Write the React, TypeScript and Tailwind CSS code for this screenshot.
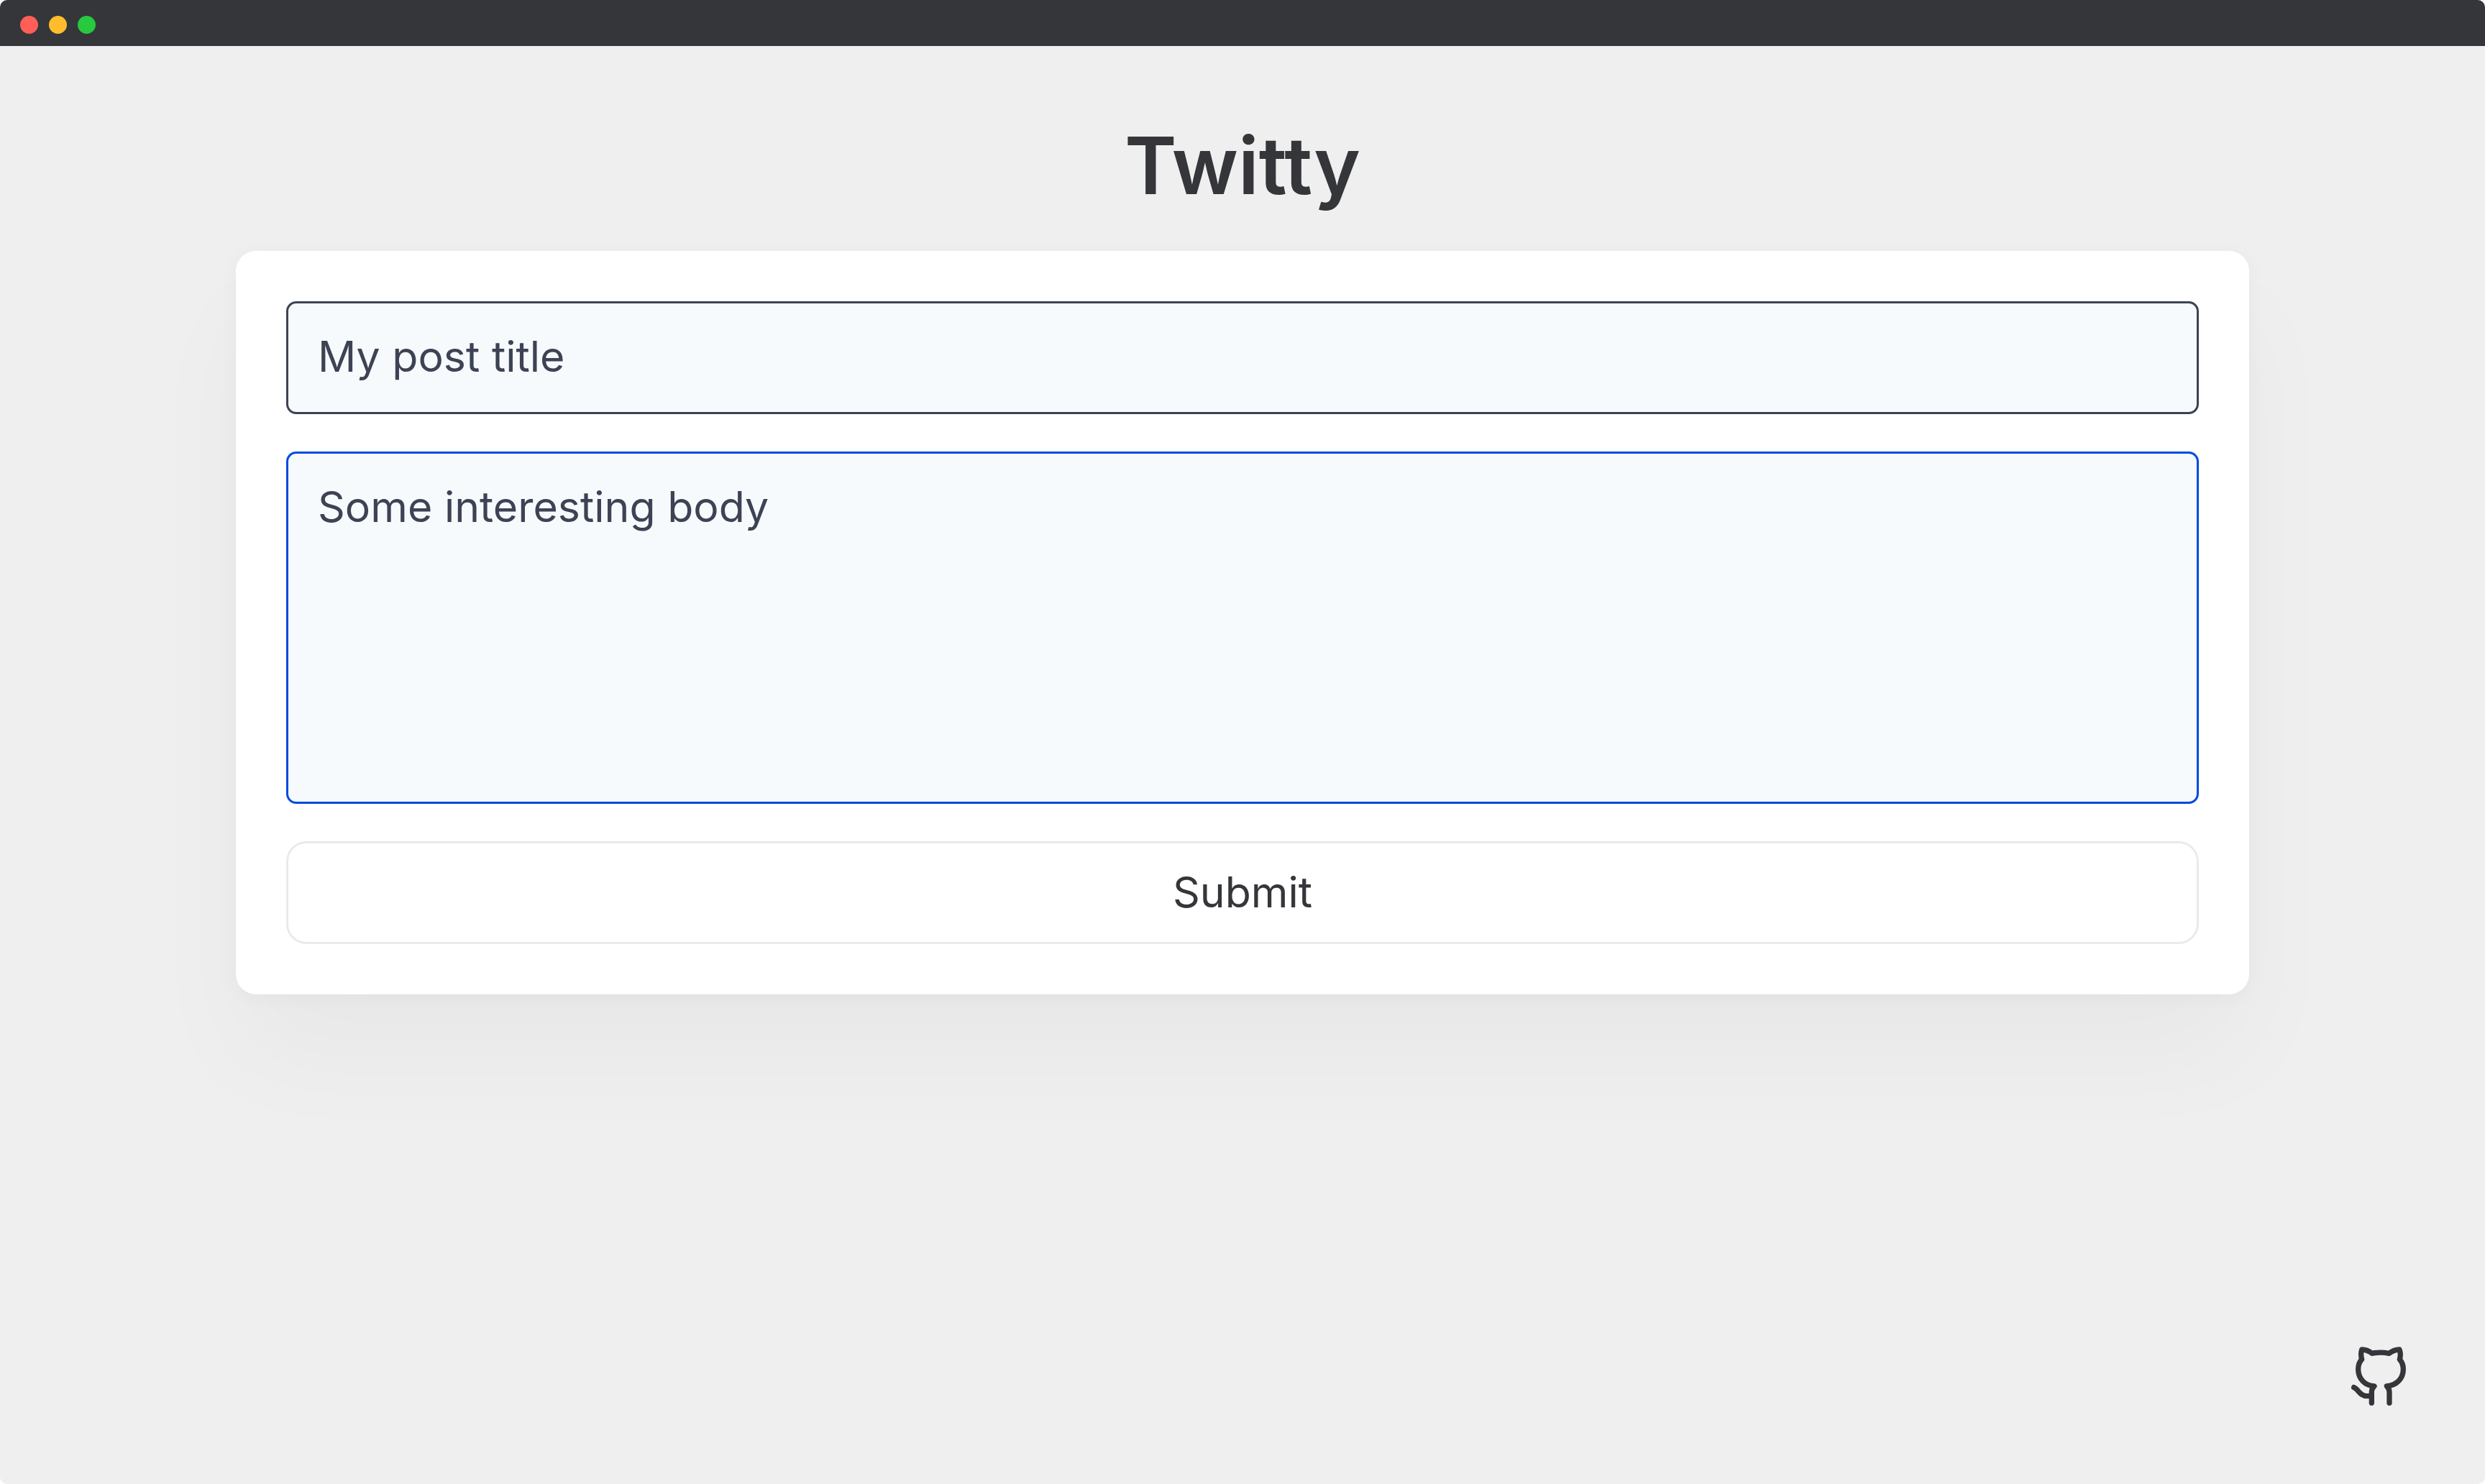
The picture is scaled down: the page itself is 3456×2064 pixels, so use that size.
import { useState } from "react";

function WindowBar() {
  return (
    <header className="flex h-16 shrink-0 items-center gap-[15px] bg-[#35363a] px-7 pt-1">
      <span className="size-[25px] rounded-full bg-[#ff5f56]" />
      <span className="size-[25px] rounded-full bg-[#ffbd2e]" />
      <span className="size-[25px] rounded-full bg-[#27c93f]" />
    </header>
  );
}

function GithubIcon() {
  return (
    <svg
      viewBox="84 63 240 264"
      className="h-[88px] w-20"
      fill="none"
      stroke="currentColor"
      strokeWidth="22"
      strokeLinecap="round"
      strokeLinejoin="round"
      aria-hidden="true"
    >
      <path d="M175 307V262C175 250 179 243 186 237C146 233 119 206 119 166C119 149 124 135 134 125C130 111 130 97 134 84C151 84 164 90 177 100Q212 93 248 100C261 90 274 84 291 84C296 97 296 111 292 125C302 136 307 149 307 166C307 206 279 233 238 237C245 243 249 250 249 262V307" />
      <path d="M101 242C121 250 125 278 155 278H172" />
    </svg>
  );
}

export default function App() {
  const [title, setTitle] = useState("My post title");
  const [body, setBody] = useState("Some interesting body");

  return (
    <div className="min-h-screen bg-white">
      <div className="flex min-h-screen flex-col overflow-hidden rounded-[10px] bg-[#efefef] font-['Inter',sans-serif] text-[#35363a]">
        <WindowBar />
        <main className="flex flex-1 flex-col items-center px-8 pt-[86px]">
          <h1 className="mb-[39px] text-[110px] leading-[160px] font-semibold">Twitty</h1>
          <form
            onSubmit={(e) => e.preventDefault()}
            className="flex w-full max-w-[2800px] flex-col gap-[52px] rounded-[28px] bg-white p-[70px] shadow-[0_88px_150px_rgba(0,0,0,0.03),0_4px_28px_rgba(0,0,0,0.035)]"
          >
            <input
              type="text"
              aria-label="Post title"
              value={title}
              onChange={(e) => setTitle(e.target.value)}
              className="h-[157px] w-full rounded-[14px] border-3 border-[#3d4354] bg-[#f6fafd] px-[41px] pb-1 text-[59px] text-[#3d4354] outline-none"
            />
            <textarea
              aria-label="Post body"
              value={body}
              onChange={(e) => setBody(e.target.value)}
              className="h-[490px] w-full resize-none rounded-[14px] border-3 border-[#004adf] bg-[#f6fafd] px-[41px] py-8 text-[59px] leading-[84px] text-[#3d4354] outline-none"
            />
            <button
              type="submit"
              className="h-[143px] w-full cursor-pointer rounded-[28px] border-3 border-[#eaeaea] bg-white text-[59px]"
            >
              Submit
            </button>
          </form>
        </main>
        <footer className="flex justify-end pr-[108px] pb-[106px]">
          <a href="#github" aria-label="GitHub">
            <GithubIcon />
          </a>
        </footer>
      </div>
    </div>
  );
}
